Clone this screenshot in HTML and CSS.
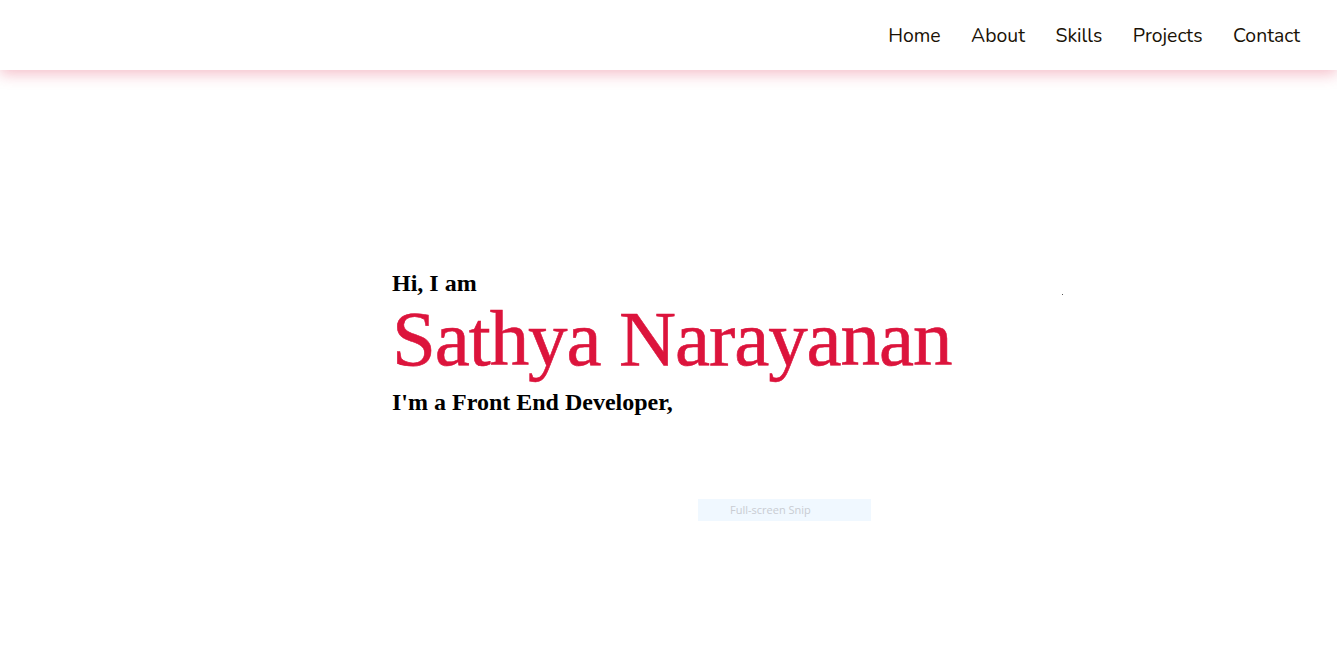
FILE: index.html
```html
<!DOCTYPE html>
<html lang="en">
<head>
<meta charset="utf-8">
<title>Sathya Narayanan</title>
<link rel="stylesheet" href="styles.css">
</head>
<body>
<header class="header">
  <nav class="nav">
    <a class="nav-link" href="#home">Home</a>
    <a class="nav-link" href="#about">About</a>
    <a class="nav-link" href="#skills">Skills</a>
    <a class="nav-link" href="#projects">Projects</a>
    <a class="nav-link" href="#contact">Contact</a>
  </nav>
</header>
<main class="hero">
  <div class="hero-text">
    <h3 class="greet">Hi, I am</h3>
    <h1 class="name">Sathya Narayanan</h1>
    <h3 class="role">I'm a Front End Developer,</h3>
  </div>
  <div class="hero-side"><span class="dot"></span></div>
  <div class="snip">Full-screen Snip</div>
</main>
</body>
</html>
```
FILE: styles.css
```css
* { box-sizing: border-box; }
html, body { margin: 0; padding: 0; background: #fff; }
body { font-family: "Liberation Serif", "Times New Roman", serif; height: 651px; overflow: hidden; }

.header {
  height: 70px;
  background: #fff;
  display: flex;
  justify-content: flex-end;
  align-items: center;
  padding-right: 37px;
  box-shadow: 0 4px 14px rgba(220, 20, 60, 0.28);
  position: relative;
  z-index: 2;
}
.nav { display: flex; gap: 30.5px; }
.nav-link {
  font-family: "Nunito", "Lato", "Open Sans", sans-serif;
  font-size: 19.4px;
  color: #1a1206;
  text-decoration: none;
}

.hero {
  position: relative;
  height: 581px;
  display: flex;
  align-items: flex-start;
  padding-left: 392px;
  padding-top: 199px;
}
.hero-text { width: 670px; }
.greet, .role {
  margin: 0;
  font-size: 24px;
  font-weight: bold;
  color: #000;
  line-height: 28px;
}
.name {
  margin: 0 0 7px;
  font-size: 79px;
  font-weight: normal;
  color: #dc143c;
  line-height: 84px;
  letter-spacing: -1.1px;
  white-space: nowrap;
  -webkit-text-stroke: 0.6px #dc143c;
}
.hero-side { padding-top: 25px; }
.dot { display: block; width: 1px; height: 1px; background: #555; }
.snip {
  position: absolute;
  left: 698px;
  top: 429px;
  width: 173px;
  height: 22px;
  background: #f0f8ff;
  color: #c9ccd2;
  font-family: "Open Sans", sans-serif;
  font-size: 11px;
  line-height: 22px;
  padding-left: 32px;
}
```
